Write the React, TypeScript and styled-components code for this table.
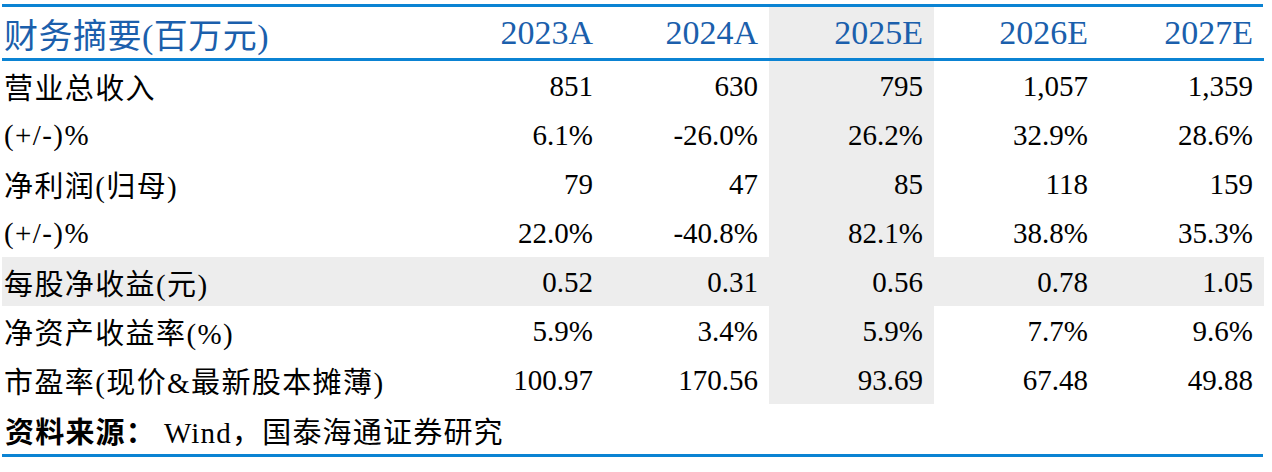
// 财务摘要 表格
import { Fragment } from "react";
import styled, { createGlobalStyle } from "styled-components";

const GlobalStyle = createGlobalStyle`
  html, body {
    margin: 0;
    padding: 0;
    background: #ffffff;
  }
  body {
    font-family: "Liberation Serif", "Noto Sans CJK SC", serif;
    color: #000000;
  }
`;

const Wrap = styled.div`
  padding: 4px 9px 0 2px;
  width: 1261px;
`;

const Table = styled.div`
  display: grid;
  grid-template-columns: 437px repeat(5, 165px);
  border-top: 3px solid #0b83d3;
  border-bottom: 3px solid #0b83d3;
`;

const Cell = styled.div<{ $head?: boolean; $label?: boolean; $shade?: boolean }>`
  display: flex;
  align-items: center;
  justify-content: ${(p) => (p.$label ? "flex-start" : "flex-end")};
  height: ${(p) => (p.$head ? "54px" : "49px")};
  padding: ${(p) => (p.$label ? "1px 0 0 2px" : "1px 11px 0 0")};
  box-sizing: border-box;
  font-size: ${(p) => (p.$head ? "34px" : "29px")};
  letter-spacing: ${(p) => (p.$label ? (p.$head ? "0.5px" : "1.4px") : "0")};
  color: ${(p) => (p.$head ? "#1b5fac" : "#000000")};
  background: ${(p) => (p.$shade ? "#ededed" : "transparent")};
  border-bottom: ${(p) => (p.$head ? "3px solid #0b83d3" : "none")};
  white-space: nowrap;
`;

const Source = styled.div`
  grid-column: 1 / -1;
  height: 50px;
  display: flex;
  align-items: center;
  padding: 2px 0 0 3px;
  box-sizing: border-box;
  font-size: 29px;
  letter-spacing: 1.2px;
  white-space: pre;
`;

const SourceLabel = styled.span`
  font-weight: bold;
`;

const years = ["2023A", "2024A", "2025E", "2026E", "2027E"];
const shadeCol = 2;

const rows: { label: string; values: string[]; shade?: boolean }[] = [
  { label: "营业总收入", values: ["851", "630", "795", "1,057", "1,359"] },
  { label: "(+/-)%", values: ["6.1%", "-26.0%", "26.2%", "32.9%", "28.6%"] },
  { label: "净利润(归母)", values: ["79", "47", "85", "118", "159"] },
  { label: "(+/-)%", values: ["22.0%", "-40.8%", "82.1%", "38.8%", "35.3%"] },
  { label: "每股净收益(元)", values: ["0.52", "0.31", "0.56", "0.78", "1.05"], shade: true },
  { label: "净资产收益率(%)", values: ["5.9%", "3.4%", "5.9%", "7.7%", "9.6%"] },
  { label: "市盈率(现价&最新股本摊薄)", values: ["100.97", "170.56", "93.69", "67.48", "49.88"] },
];

const App = () => {
  return (
    <>
      <GlobalStyle />
      <Wrap>
        <Table>
          <Cell $head $label>
            财务摘要(百万元)
          </Cell>
          {years.map((y, i) => (
            <Cell key={y} $head $shade={i === shadeCol}>
              {y}
            </Cell>
          ))}
          {rows.map((r, ri) => (
            <Fragment key={ri}>
              <Cell $label $shade={r.shade}>
                {r.label}
              </Cell>
              {r.values.map((v, i) => (
                <Cell key={i} $shade={r.shade || i === shadeCol}>
                  {v}
                </Cell>
              ))}
            </Fragment>
          ))}
          <Source>
            <SourceLabel>资料来源：</SourceLabel> Wind，国泰海通证券研究
          </Source>
        </Table>
      </Wrap>
    </>
  );
};

export default App;
